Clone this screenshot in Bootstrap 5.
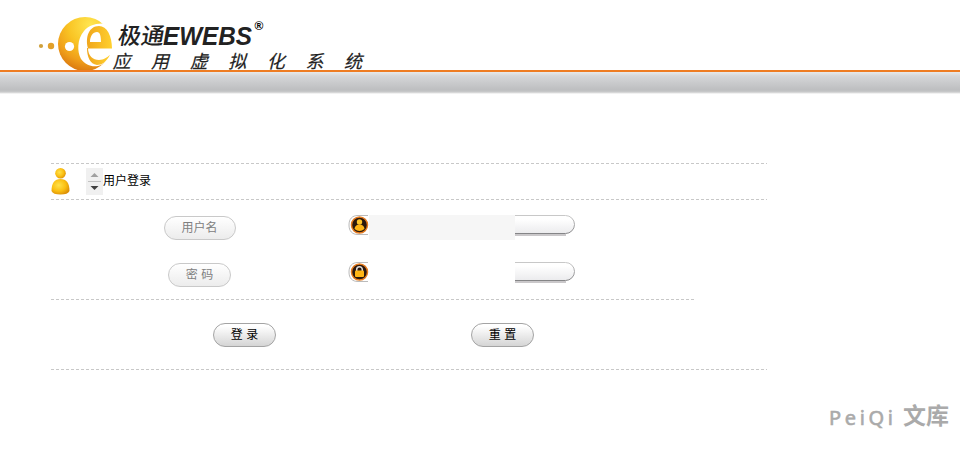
<!DOCTYPE html>
<html lang="zh-CN">
<head>
<meta charset="utf-8">
<title>极通EWEBS</title>
<link href="https://cdn.jsdelivr.net/npm/bootstrap@5.3.0/dist/css/bootstrap.min.css" rel="stylesheet">
<style>
body{background:#fff;font:12px/18px "Liberation Sans","Noto Sans CJK SC",sans-serif;color:#000;height:450px;overflow:hidden}
.brand-area{height:70px}
.brand-area svg{display:block;overflow:visible}
.brand-strip{height:24px;border-top:2px solid #ee7c22;background:linear-gradient(#e8e9ea 0,#d5d6d8 4px,#bdbec0 18px,#c9cacb 20px,#e4e4e4 21px,#fff 22px)}
.login-panel{width:716px;margin:69px 0 0 51px}
.dash{height:1px;background:repeating-linear-gradient(90deg,#c8c8c8 0 3px,transparent 3px 5px)}
.dash-short{width:644px}
.title-row{height:35px}
.title-row .person{margin-right:16px}
.title-row span{margin-top:-2px}
.fields{height:99px;padding-top:15px}
.field-row{height:47px}
.label-cell{width:297px;padding-top:1px}
.pill{height:24px;border-radius:12px;border:1px solid #c9c9c9;background:linear-gradient(#fff,#ececec);color:#808080;line-height:22px;text-align:center;padding:0}
.pill-wide{width:72px}
.pill-narrow{width:63px}
.pill-action{border-color:#a4a4a4;background:linear-gradient(#fff 10%,#ececec 50%,#d5d5d5);color:#000;font-size:12px}
.mask{width:146px;height:25px;background:#f6f6f6}
.mask-blank{background:#fff}
.actions{height:69px;padding:23px 0 0 162px}
.actions .pill+.pill{margin-left:195px}
.mark-row{margin-top:32px;padding-right:10px}
.mark-row svg{overflow:visible}
</style>
<script src="https://cdn.jsdelivr.net/npm/bootstrap@5.3.0/dist/js/bootstrap.bundle.min.js"></script>
</head>
<body>
<header>
<div class="brand-area">
<svg width="400" height="70" viewBox="0 0 400 70">
<defs>
<radialGradient id="orb" cx=".6" cy=".15" r=".9"><stop offset="0" stop-color="#ffe650"/><stop offset=".45" stop-color="#f9c424"/><stop offset=".75" stop-color="#f0a01a"/><stop offset="1" stop-color="#d8740f"/></radialGradient>
<linearGradient id="edge" x1="0" x2="1" y1="0" y2="0"><stop offset="0" stop-color="#f0a61c"/><stop offset="1" stop-color="#ffd02e"/></linearGradient>
<clipPath id="orb-clip"><path d="M50 10H120V70H50Z"/></clipPath>
</defs>
<circle cx="41" cy="46" r="2.1" fill="#cfa03c"/><circle cx="51" cy="46" r="3.200" fill="#e2a02a"/>
<g clip-path="url(#orb-clip)">
<circle cx="85" cy="44" r="27" fill="url(#orb)"/>
<path d="M114 26C101 21 90 24 84 31C77 39 77 52 81 59C87 67 96 68 103 64L116 54Z" fill="#fff"/>
<path fill-rule="evenodd" d="M112 48.500H88C85 37 89 26 99 26C107 26 112 36 112 48.500ZM90 42H101C101 36 100 32 97 32C93 32 90 36 90 42Z" fill="url(#edge)"/>
<path d="M88 48C88 56 93 60 99 60C104 60 107 57 110 55C106 62 102 65 97 65C90 64 87 57 87 48Z" fill="url(#edge)"/>
</g>
<circle cx="69.500" cy="46.500" r="4.600" fill="#fff"/>
<g fill="#222" font-family="'Liberation Sans','Noto Sans CJK SC',sans-serif">
<text transform="translate(117 44) skewX(-10)" font-size="23" textLength="46" font-family="'Noto Sans CJK SC'" font-weight="500">极通</text>
<text x="163" y="45" font-size="25" font-weight="700" font-style="italic" textLength="89" lengthAdjust="spacingAndGlyphs">EWEBS</text>
<text x="254.500" y="30" font-size="12" font-weight="700" fill="#000">®</text>
<text transform="translate(112.500 68) skewX(-14)" font-size="18" letter-spacing="20.600" font-family="'Noto Sans CJK SC'" stroke="#222" stroke-width=".2">应用虚拟化系统</text>
</g>
</svg>
</div>
<div class="brand-strip"></div>
</header>
<main class="login-panel">
<div class="dash"></div>
<div class="title-row d-flex align-items-center">
<svg class="person" width="19" height="29" viewBox="0 0 19 29"><defs><radialGradient id="gold" cx=".4" cy=".4" r=".65"><stop stop-color="#ffe24c"/><stop offset=".6" stop-color="#fabf12"/><stop offset="1" stop-color="#dc9008"/></radialGradient></defs><path d="M.5 24C.5 16 3.500 12 9.500 12S18.500 16 18.500 24Q17 27.500 9.500 27.500T.5 24Z" fill="url(#gold)"/><circle cx="9.500" cy="6.300" r="5.300" fill="url(#gold)"/></svg>
<svg width="17" height="27" viewBox="0 0 17 27"><path fill="#f0f0f0" d="M0 0h17v27H0z"/><path d="M4.500 9L8.500 5L12.500 9Z" fill="#a0a0a0"/><path d="M2 13h13v1H2z" fill="#c2c2c2"/><path d="M4.500 18L8.500 22L12.500 18Z" fill="#404040"/></svg>
<span>用户登录</span>
</div>
<div class="dash"></div>
<div class="fields">
<div class="field-row d-flex align-items-start">
<div class="label-cell d-flex justify-content-center"><div class="pill pill-wide">用户名</div></div>
<svg width="21" height="22" viewBox="0 0 21 22"><path d="M20 .5H10C4 .5 1 4 1 10S4 19.500 10 19.500H20" fill="#fff" stroke="#bbb"/><circle cx="11.500" cy="10" r="8" fill="#2b180d" stroke="#e57c20" stroke-width="1.500"/><circle cx="11.500" cy="7" r="2.700" fill="#ffc52b"/><path d="M6.500 14Q7 9.500 11.500 9.500T16.500 14Q14 16 11.500 16T6.500 14Z" fill="#ffb515"/></svg>
<div class="mask"></div>
<svg width="60" height="22" viewBox="0 0 60 22"><use href="#capsule"/></svg>
</div>
<div class="field-row d-flex align-items-start">
<div class="label-cell d-flex justify-content-center"><div class="pill pill-narrow">密 码</div></div>
<svg width="21" height="22" viewBox="0 0 21 22"><path d="M20 .5H10C4 .5 1 4 1 10S4 19.500 10 19.500H20" fill="#fff" stroke="#bbb"/><circle cx="11.500" cy="10" r="8" fill="#2b180d" stroke="#e57c20" stroke-width="1.500"/><path d="M8.700 9V7.500a2.800 2.800 0 0 1 5.600 0V9" fill="none" stroke="#ddd" stroke-width="1.500"/><rect x="7" y="8.500" width="9" height="6.500" rx="1" fill="#ffb515"/></svg>
<div class="mask mask-blank"></div>
<svg width="60" height="22" viewBox="0 0 60 22"><defs><linearGradient id="cap" x2="0" y2="1"><stop offset=".2" stop-color="#fff"/><stop offset="1" stop-color="#ebebed"/></linearGradient><linearGradient id="rim" x2="0" y2="1"><stop stop-color="#c8c8c8"/><stop offset="1" stop-color="#858587"/></linearGradient></defs><g id="capsule"><path d="M0 20h51" stroke="#cac8ca" stroke-width="2"/><path d="M0 .5H50.500a9 9 0 0 1 0 18H0" fill="url(#cap)" stroke="url(#rim)"/></g></svg>
</div>
</div>
<div class="dash dash-short"></div>
<div class="actions d-flex align-items-start">
<button type="button" class="pill pill-narrow pill-action">登 录</button>
<button type="button" class="pill pill-narrow pill-action">重 置</button>
</div>
<div class="dash"></div>
</main>
<footer class="mark-row d-flex justify-content-end">
<svg width="122" height="30" viewBox="0 0 122 30" fill="#aaa" stroke="#aaa" stroke-width=".6"><text x="1" y="23" font-family="'Noto Sans',sans-serif" font-size="20" textLength="64">PeiQi</text><text x="75" y="22" font-family="'Noto Sans CJK SC',sans-serif" font-size="23" font-weight="700" stroke="none">文库</text></svg>
</footer>
</body>
</html>
